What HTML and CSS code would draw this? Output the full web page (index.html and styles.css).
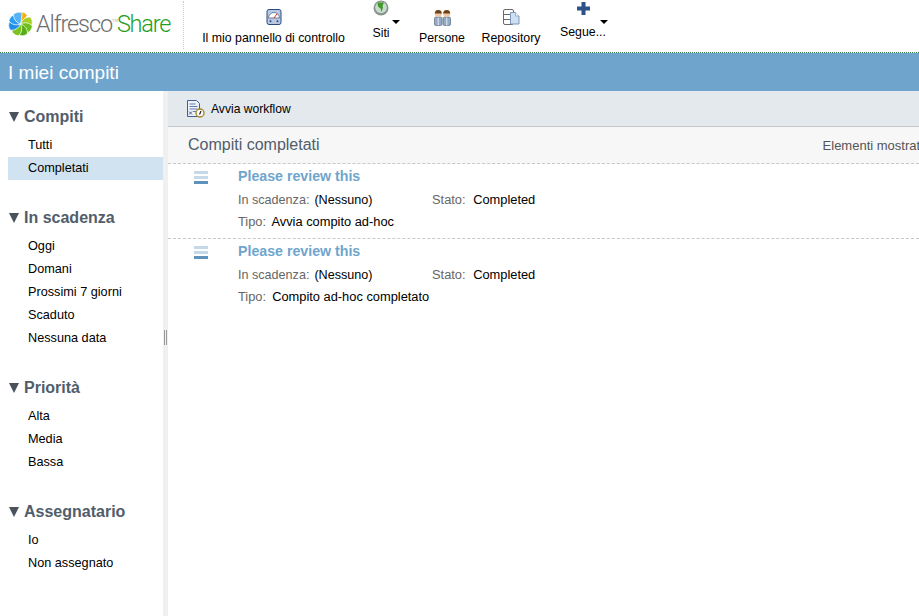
FILE: index.html
```html
<!DOCTYPE html>
<html lang="it">
<head>
    <meta charset="UTF-8">
    <title>I miei compiti</title>
    <link rel="stylesheet" href="styles.css">
</head>
<body>

<header class="topbar">
    <div class="logo">
        <svg class="logo-mark" width="25" height="26" viewBox="-13 -13 26 26">
            <g stroke="#fff" stroke-width=".7">
                <path d="M0 0C-3-3-4-9-1-12.500 3-13 6-11 7-9 5-6 3-3 0 0z" fill="#f5ad12"/>
                <path d="M0 0C-3-3-4-9-1-12.500 3-13 6-11 7-9 5-6 3-3 0 0z" fill="#a6cf24" transform="rotate(60)"/>
                <path d="M0 0C-3-3-4-9-1-12.500 3-13 6-11 7-9 5-6 3-3 0 0z" fill="#6fbf1c" transform="rotate(105)"/>
                <path d="M0 0C-3-3-4-9-1-12.500 3-13 6-11 7-9 5-6 3-3 0 0z" fill="#57ad16" transform="rotate(150)"/>
                <path d="M0 0C-3-3-4-9-1-12.500 3-13 6-11 7-9 5-6 3-3 0 0z" fill="#7cc320" transform="rotate(195)"/>
                <path d="M0 0C-3-3-4-9-1-12.500 3-13 6-11 7-9 5-6 3-3 0 0z" fill="#1f8fe6" transform="rotate(245)"/>
                <path d="M0 0C-3-3-4-9-1-12.500 3-13 6-11 7-9 5-6 3-3 0 0z" fill="#2b9df0" transform="rotate(290)"/>
                <path d="M0 0C-3-3-4-9-1-12.500 3-13 6-11 7-9 5-6 3-3 0 0z" fill="#55b4f5" transform="rotate(330)"/>
            </g>
        </svg>
        <span class="logo-alfresco">Alfresco</span><span class="logo-tm">TM</span><span class="logo-share">Share</span>
    </div>
    <nav class="nav">
        <a class="nav-item nav-dash">
            <svg width="16" height="16" viewBox="0 0 16 16">
                <rect x="1" y=".5" width="14" height="15" rx="2" fill="#b9c9e2" stroke="#2b4a80"/>
                <path d="M2.500 9a5.500 5.500 0 0 1 11 0z" fill="#fff" stroke="#55688c" stroke-width=".8"/>
                <path d="M8 9l3-4" stroke="#c8322c"/>
                <circle cx="4.500" cy="12.300" r="1" fill="#2b4a80"/>
                <circle cx="11.500" cy="12.300" r="1" fill="#2b4a80"/>
            </svg>
            <span>Il mio pannello di controllo</span>
        </a>
        <a class="nav-item nav-menu nav-siti">
            <svg width="16" height="16" viewBox="0 0 16 16">
                <circle cx="8" cy="8" r="7.500" fill="#87948f"/>
                <circle cx="8" cy="7.500" r="5.800" fill="#c9dccb"/>
                <path d="M4.500 2.500h6.500L9.500 6 10 7.500 8.500 12 7.500 8.500 5 6.500z" fill="#3f9a2b"/>
            </svg>
            <span>Siti</span>
            <i class="caret"></i>
        </a>
        <a class="nav-item nav-persone">
            <svg width="17" height="17" viewBox="0 0 17 17">
                <rect x=".5" y="8" width="7.500" height="8.500" rx="1.500" fill="#93abc9" stroke="#5a6b80" stroke-width=".7"/>
                <rect x="9" y="8" width="7.500" height="8.500" rx="1.500" fill="#93abc9" stroke="#5a6b80" stroke-width=".7"/>
                <path d="M4.200 8.500v8M12.800 8.500v8" stroke="#dfe8f2"/>
                <circle cx="4.300" cy="4.600" r="3.500" fill="#f0c6a4"/>
                <circle cx="12.700" cy="4.600" r="3.500" fill="#f0c6a4"/>
                <path d="M.8 4.500a3.500 3.500 0 0 1 7 0zM9.200 4.500a3.500 3.500 0 0 1 7 0z" fill="#6f4215"/>
            </svg>
            <span>Persone</span>
        </a>
        <a class="nav-item nav-repo">
            <svg width="17" height="17" viewBox="0 0 17 17">
                <rect x=".5" y=".5" width="10" height="15" rx="1.500" fill="#fff" stroke="#6a6a6a"/>
                <path d="M1 5.500h9M1 10.500h9" stroke="#6a6a6a"/>
                <path d="M7.500 3.500h5l3.500 3.500v8h-8.500z" fill="#cfe0f2" stroke="#7f97b8"/>
                <path d="M12.500 3.500v3.500h3.500" fill="#fff" stroke="#7f97b8" stroke-width=".7"/>
            </svg>
            <span>Repository</span>
        </a>
        <a class="nav-item nav-menu nav-more">
            <svg width="13" height="13" viewBox="0 0 13 13">
                <path d="M4.500 0h4v4.500h4.500v4H8.500v4.500h-4V8.500H0v-4h4.500z" fill="#2c5288"/>
            </svg>
            <span>Segue...</span>
            <i class="caret"></i>
        </a>
    </nav>
</header>

<div class="titlebar">I miei compiti</div>

<div class="layout">
    <aside class="sidebar">
        <section class="filter">
            <h3><i class="arrow"></i>Compiti</h3>
            <ul>
                <li>Tutti</li>
                <li class="selected">Completati</li>
            </ul>
        </section>
        <section class="filter">
            <h3><i class="arrow"></i>In scadenza</h3>
            <ul>
                <li>Oggi</li>
                <li>Domani</li>
                <li>Prossimi 7 giorni</li>
                <li>Scaduto</li>
                <li>Nessuna data</li>
            </ul>
        </section>
        <section class="filter">
            <h3><i class="arrow"></i>Priorità</h3>
            <ul>
                <li>Alta</li>
                <li>Media</li>
                <li>Bassa</li>
            </ul>
        </section>
        <section class="filter">
            <h3><i class="arrow"></i>Assegnatario</h3>
            <ul>
                <li>Io</li>
                <li>Non assegnato</li>
            </ul>
        </section>
    </aside>

    <div class="splitter"><i class="handle"></i></div>

    <main class="content">
        <div class="toolbar">
            <svg width="18" height="18" viewBox="0 0 18 18">
                <path d="M.5.500h9l3 3v13h-12z" fill="#eef2f8" stroke="#3f5f95"/>
                <path d="M2.500 4h6M2.500 6.500h8M2.500 9h8M6 11.500h3" stroke="#5f7fb0"/>
                <path d="M2 11.500l3 3M5 11.500l-3 3" stroke="#3f5f95"/>
                <circle cx="13" cy="13" r="4" fill="#fff" stroke="#a8852a" stroke-width="1.400"/>
                <path d="M14 11l-1.500 3.500" stroke="#222" stroke-width="1.200"/>
            </svg>
            <span>Avvia workflow</span>
        </div>
        <div class="list-head">
            <h2>Compiti completati</h2>
            <span class="list-info">Elementi mostrati</span>
        </div>
        <article class="task">
            <div class="task-icon"><i></i><i></i><i></i></div>
            <div class="task-body">
                <a class="task-title">Please review this</a>
                <div class="task-row">
                    <span class="field field-due"><b>In scadenza:</b> (Nessuno)</span>
                    <span class="field field-status"><b>Stato:</b> Completed</span>
                </div>
                <div class="task-row">
                    <span class="field"><b>Tipo:</b> Avvia compito ad-hoc</span>
                </div>
            </div>
        </article>
        <article class="task">
            <div class="task-icon"><i></i><i></i><i></i></div>
            <div class="task-body">
                <a class="task-title">Please review this</a>
                <div class="task-row">
                    <span class="field field-due"><b>In scadenza:</b> (Nessuno)</span>
                    <span class="field field-status"><b>Stato:</b> Completed</span>
                </div>
                <div class="task-row">
                    <span class="field"><b>Tipo:</b> Compito ad-hoc completato</span>
                </div>
            </div>
        </article>
    </main>
</div>

</body>
</html>
```

FILE: styles.css
```css
* {
    box-sizing: border-box;
}

html, body {
    height: 100%;
}

body {
    margin: 0;
    font-family: "Liberation Sans", Arial, sans-serif;
    font-size: 12.7px;
    color: #000;
    background: #fff;
    overflow: hidden;
    display: flex;
    flex-direction: column;
}

/* header */
.topbar {
    display: flex;
    height: 53px;
    flex: none;
    border-bottom: 1px dotted #3f7f4a;
    background: #fff;
}

.logo {
    width: 184px;
    height: 48px;
    margin-top: 1px;
    padding: 9px 0 0 8px;
    display: flex;
    align-items: flex-start;
    border-right: 1px dotted #ccc;
    white-space: nowrap;
    font-family: Roboto, "Liberation Sans", sans-serif;
    font-weight: 300;
}

.logo-mark {
    flex: none;
    margin-top: 1px;
}

.logo-alfresco {
    margin-left: 3px;
    font-size: 23.5px;
    line-height: 28px;
    letter-spacing: -1.1px;
    color: #6d6e70;
}

.logo-tm {
    font-size: 4px;
    margin-top: 8px;
    margin-right: -1px;
    color: #888;
}

.logo-share {
    font-size: 23.5px;
    line-height: 28px;
    letter-spacing: -1.2px;
    color: #1ea01e;
}

.nav {
    display: flex;
    padding-left: 18px;
    font-size: 12.35px;
}

.nav-item {
    position: relative;
    display: flex;
    flex-direction: column;
    align-items: center;
    padding-top: 9px;
    gap: 6px;
    white-space: nowrap;
}

.nav-dash { width: 143px; }
.nav-siti { width: 16px; margin-left: 28px; padding-top: 0; gap: 10px; }
.nav-persone { width: 46px; margin-left: 30px; gap: 5px; }
.nav-repo { width: 60px; margin-left: 16px; gap: 5px; }
.nav-more { width: 46px; margin-left: 19px; padding-top: 2px; gap: 10px; }

.caret {
    position: absolute;
    top: 20px;
    right: -11px;
    border: 4px solid transparent;
    border-top: 4px solid #000;
    border-bottom: 0;
}

.nav-more .caret {
    right: -2px;
}

/* page title */
.titlebar {
    flex: none;
    height: 38px;
    padding-left: 8px;
    line-height: 39px;
    font-size: 19px;
    color: #fff;
    background: #6fa5cd;
}

.layout {
    flex: 1;
    display: flex;
    min-height: 0;
}

/* left filters */
.sidebar {
    width: 163px;
    flex: none;
    padding: 14px 0 0 8px;
}

.filter {
    margin-bottom: 26px;
}

.filter h3 {
    margin: 0 0 6px;
    font-size: 16px;
    line-height: 23px;
    color: #515d6b;
    font-weight: bold;
    display: flex;
    align-items: center;
}

.arrow {
    flex: none;
    width: 0;
    height: 0;
    margin: 0 5px 0 1px;
    border-left: 5px solid transparent;
    border-right: 5px solid transparent;
    border-top: 10px solid #4a525c;
}

.filter ul {
    margin: 0;
    padding: 0;
    list-style: none;
}

.filter li {
    height: 23px;
    line-height: 23px;
    padding-left: 20px;
}

.filter li.selected {
    background: #d1e3f1;
}

.splitter {
    width: 5px;
    flex: none;
    background: #f0f0f0;
    display: flex;
    align-items: center;
    justify-content: center;
    padding-bottom: 32px;
}

.handle {
    width: 3px;
    height: 15px;
    border-left: 1px solid #999;
    border-right: 1px solid #999;
}

/* main column */
.content {
    flex: 1;
    min-width: 0;
    overflow: hidden;
}

.toolbar {
    height: 36px;
    display: flex;
    align-items: center;
    gap: 6px;
    padding-left: 19px;
    background: #e3e9ec;
    border-bottom: 1px solid #c3c9cc;
    font-size: 12.1px;
}

.list-head {
    height: 37px;
    display: flex;
    justify-content: space-between;
    align-items: center;
    padding-left: 20px;
    background: #f7f7f7;
    border-bottom: 1px dashed #c8c8c8;
    white-space: nowrap;
}

.list-head h2 {
    margin: 0;
    font-size: 16px;
    font-weight: normal;
    color: #515d6b;
}

.list-info {
    margin-right: -4px;
    font-size: 13px;
    color: #555;
}

.task {
    height: 75px;
    display: flex;
    border-bottom: 1px dashed #c8c8c8;
}

.task:last-child {
    border-bottom: 0;
}

.task-icon {
    width: 70px;
    flex: none;
    padding: 7px 0 0 26px;
}

.task-icon i {
    display: block;
    width: 14px;
    height: 3px;
    margin-bottom: 2px;
    background: #c5d9e8;
}

.task-icon i:last-child {
    background: #5f93bd;
}

.task-title {
    display: block;
    margin-top: 3px;
    font-size: 14.2px;
    font-weight: bold;
    line-height: 18px;
    color: #6fa5cd;
}

.task-row {
    display: flex;
    margin-top: 4px;
    height: 18px;
    line-height: 18px;
}

.task-title + .task-row {
    margin-top: 6px;
}

.field {
    font-size: 12.85px;
}

.field b {
    font-weight: normal;
    color: #666;
    margin-right: 2.500px;
}

.field-due {
    width: 194px;
    font-size: 12.6px;
}

.field-due b {
    margin-right: 1.500px;
}

.field-status b {
    margin-right: 4px;
}
```
